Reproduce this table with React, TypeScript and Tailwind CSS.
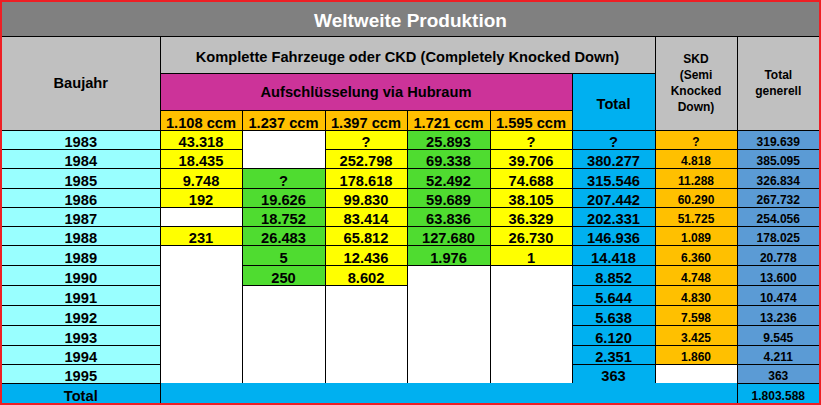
import type { ReactNode } from 'react';

const LC = 'bg-[#99ffff]';
const Y = 'bg-[#ffff00]';
const G = 'bg-[#4fdc30]';
const W = 'bg-white';
const T = 'bg-[#00b0f0]';
const O = 'bg-[#ffc000]';
const B = 'bg-[#5b9bd5]';

interface TdProps {
  bg: string;
  small?: boolean;
  rowSpan?: number;
  colSpan?: number;
  className?: string;
  children?: ReactNode;
}

function Td({ bg, small, rowSpan, colSpan, className = '', children }: TdProps) {
  return (
    <td
      rowSpan={rowSpan}
      colSpan={colSpan}
      className={`border border-black p-0 text-center align-bottom leading-[14px] ${
        small ? 'text-[12px]' : 'text-[14.67px]'
      } ${bg} ${className}`}
    >
      {children}
    </td>
  );
}

function Head({ className = '', rowSpan, colSpan, children }: { className?: string; rowSpan?: number; colSpan?: number; children: ReactNode }) {
  return (
    <th rowSpan={rowSpan} colSpan={colSpan} className={`border border-black p-0 text-center align-middle font-bold ${className}`}>
      {children}
    </th>
  );
}

export default function App() {
  return (
    <div className="w-[821px] h-[405px] bg-white font-['Liberation_Sans',Arial,sans-serif] font-bold text-black">
      <table className="w-[821px] table-fixed border-collapse border-2 border-[#ee1f24]">
        <colgroup>
          <col className="w-[159px]" />
          <col className="w-[82px]" />
          <col className="w-[83px]" />
          <col className="w-[82px]" />
          <col className="w-[83px]" />
          <col className="w-[82px]" />
          <col className="w-[83px]" />
          <col className="w-[82px]" />
          <col className="w-[83px]" />
        </colgroup>
        <thead>
          <tr className="h-[35px]">
            <Head colSpan={9} className="bg-[#808080] pt-1 text-[19px] text-white">
              Weltweite Produktion
            </Head>
          </tr>
          <tr className="h-[37px]">
            <Head rowSpan={3} className="bg-[#c0c0c0] text-[14.67px]">
              Baujahr
            </Head>
            <Head colSpan={6} className="bg-[#c0c0c0] pt-1 text-[14.67px]">
              Komplette Fahrzeuge oder CKD (Completely Knocked Down)
            </Head>
            <Head rowSpan={3} className="bg-[#c0c0c0] text-[12px] leading-[16px]">
              SKD
              <br />
              (Semi
              <br />
              Knocked
              <br />
              Down)
            </Head>
            <Head rowSpan={3} className="bg-[#c0c0c0] text-[12px] leading-[16px]">
              Total
              <br />
              generell
            </Head>
          </tr>
          <tr className="h-[37px]">
            <Head colSpan={5} className="bg-[#cc3399] text-[14.67px]">
              Aufschlüsselung via Hubraum
            </Head>
            <Head rowSpan={2} className={`${T} pt-1 text-[14.67px]`}>
              Total
            </Head>
          </tr>
          <tr className="h-[20px]">
            <Td bg={O}>1.108 ccm</Td>
            <Td bg={O}>1.237 ccm</Td>
            <Td bg={O}>1.397 ccm</Td>
            <Td bg={O}>1.721 ccm</Td>
            <Td bg={O}>1.595 ccm</Td>
          </tr>
        </thead>
        <tbody>
          <tr className="h-[19px]">
            <Td bg={LC}>1983</Td>
            <Td bg={Y}>43.318</Td>
            <Td bg={W} rowSpan={2} />
            <Td bg={Y}>?</Td>
            <Td bg={G}>25.893</Td>
            <Td bg={Y}>?</Td>
            <Td bg={T}>?</Td>
            <Td bg={O} small>?</Td>
            <Td bg={B} small>319.639</Td>
          </tr>
          <tr className="h-[19px]">
            <Td bg={LC}>1984</Td>
            <Td bg={Y}>18.435</Td>
            <Td bg={Y}>252.798</Td>
            <Td bg={G}>69.338</Td>
            <Td bg={Y}>39.706</Td>
            <Td bg={T}>380.277</Td>
            <Td bg={O} small>4.818</Td>
            <Td bg={B} small>385.095</Td>
          </tr>
          <tr className="h-[20px]">
            <Td bg={LC}>1985</Td>
            <Td bg={Y}>9.748</Td>
            <Td bg={G}>?</Td>
            <Td bg={Y}>178.618</Td>
            <Td bg={G}>52.492</Td>
            <Td bg={Y}>74.688</Td>
            <Td bg={T}>315.546</Td>
            <Td bg={O} small>11.288</Td>
            <Td bg={B} small>326.834</Td>
          </tr>
          <tr className="h-[19px]">
            <Td bg={LC}>1986</Td>
            <Td bg={Y}>192</Td>
            <Td bg={G}>19.626</Td>
            <Td bg={Y}>99.830</Td>
            <Td bg={G}>59.689</Td>
            <Td bg={Y}>38.105</Td>
            <Td bg={T}>207.442</Td>
            <Td bg={O} small>60.290</Td>
            <Td bg={B} small>267.732</Td>
          </tr>
          <tr className="h-[19px]">
            <Td bg={LC}>1987</Td>
            <Td bg={W} />
            <Td bg={G}>18.752</Td>
            <Td bg={Y}>83.414</Td>
            <Td bg={G}>63.836</Td>
            <Td bg={Y}>36.329</Td>
            <Td bg={T}>202.331</Td>
            <Td bg={O} small>51.725</Td>
            <Td bg={B} small>254.056</Td>
          </tr>
          <tr className="h-[19px]">
            <Td bg={LC}>1988</Td>
            <Td bg={Y}>231</Td>
            <Td bg={G}>26.483</Td>
            <Td bg={Y}>65.812</Td>
            <Td bg={G}>127.680</Td>
            <Td bg={Y}>26.730</Td>
            <Td bg={T}>146.936</Td>
            <Td bg={O} small>1.089</Td>
            <Td bg={B} small>178.025</Td>
          </tr>
          <tr className="h-[20px]">
            <Td bg={LC}>1989</Td>
            <Td bg={W} rowSpan={7} />
            <Td bg={G}>5</Td>
            <Td bg={Y}>12.436</Td>
            <Td bg={G}>1.976</Td>
            <Td bg={Y}>1</Td>
            <Td bg={T}>14.418</Td>
            <Td bg={O} small>6.360</Td>
            <Td bg={B} small>20.778</Td>
          </tr>
          <tr className="h-[20px]">
            <Td bg={LC}>1990</Td>
            <Td bg={G}>250</Td>
            <Td bg={Y}>8.602</Td>
            <Td bg={W} rowSpan={6} />
            <Td bg={W} rowSpan={6} />
            <Td bg={T}>8.852</Td>
            <Td bg={O} small>4.748</Td>
            <Td bg={B} small>13.600</Td>
          </tr>
          <tr className="h-[20px]">
            <Td bg={LC}>1991</Td>
            <Td bg={W} rowSpan={5} />
            <Td bg={W} rowSpan={5} />
            <Td bg={T}>5.644</Td>
            <Td bg={O} small>4.830</Td>
            <Td bg={B} small>10.474</Td>
          </tr>
          <tr className="h-[20px]">
            <Td bg={LC}>1992</Td>
            <Td bg={T}>5.638</Td>
            <Td bg={O} small>7.598</Td>
            <Td bg={B} small>13.236</Td>
          </tr>
          <tr className="h-[20px]">
            <Td bg={LC}>1993</Td>
            <Td bg={T}>6.120</Td>
            <Td bg={O} small>3.425</Td>
            <Td bg={B} small>9.545</Td>
          </tr>
          <tr className="h-[19px]">
            <Td bg={LC}>1994</Td>
            <Td bg={T}>2.351</Td>
            <Td bg={O} small>1.860</Td>
            <Td bg={B} small>4.211</Td>
          </tr>
          <tr className="h-[19px]">
            <Td bg={LC}>1995</Td>
            <Td bg={T}>363</Td>
            <Td bg={W} />
            <Td bg={B} small>363</Td>
          </tr>
          <tr className="h-[21px]">
            <Td bg={T}>Total</Td>
            <Td bg={T} colSpan={7} className="[border-top-style:hidden]" />
            <Td bg={T} small>1.803.588</Td>
          </tr>
        </tbody>
      </table>
    </div>
  );
}
